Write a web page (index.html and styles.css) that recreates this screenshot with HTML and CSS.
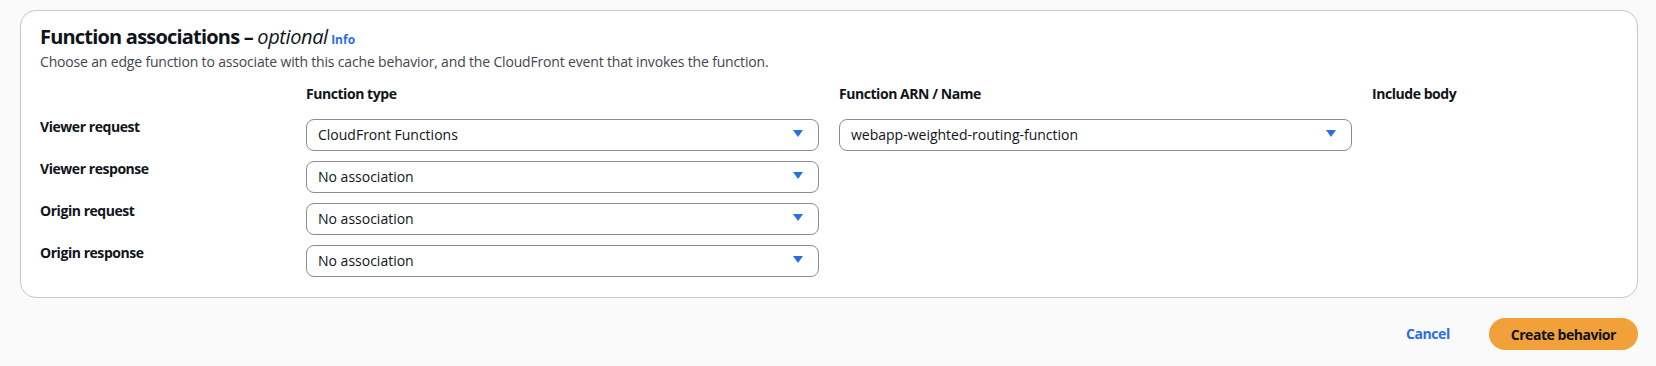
FILE: index.html
```html
<!DOCTYPE html>
<html>
<head>
    <meta charset="UTF-8">
    <meta name="viewport" content="width=device-width, initial-scale=1.0">
    <title>Function associations</title>
    <link rel="stylesheet" href="styles.css">
</head>
<body>
    <div class="page">
        <!-- Function associations panel -->
        <div class="card">
            <div class="card-header">
                <h2>Function associations – <i>optional</i> <a class="info" href="#">Info</a></h2>
                <p class="desc">Choose an edge function to associate with this cache behavior, and the CloudFront event that invokes the function.</p>
            </div>

            <div class="assoc-grid">
                <div class="col-head"></div>
                <div class="col-head">Function type</div>
                <div class="col-head">Function ARN / Name</div>
                <div class="col-head">Include body</div>

                <div class="row-label">Viewer request</div>
                <div class="select">
                    <span>CloudFront Functions</span>
                    <svg class="caret" width="10" height="7" viewBox="0 0 10 7"><path d="M0 0 H10 L5 7 Z"/></svg>
                </div>
                <div class="select">
                    <span>webapp-weighted-routing-function</span>
                    <svg class="caret" width="10" height="7" viewBox="0 0 10 7"><path d="M0 0 H10 L5 7 Z"/></svg>
                </div>
                <div></div>

                <div class="row-label">Viewer response</div>
                <div class="select">
                    <span>No association</span>
                    <svg class="caret" width="10" height="7" viewBox="0 0 10 7"><path d="M0 0 H10 L5 7 Z"/></svg>
                </div>
                <div></div>
                <div></div>

                <div class="row-label">Origin request</div>
                <div class="select">
                    <span>No association</span>
                    <svg class="caret" width="10" height="7" viewBox="0 0 10 7"><path d="M0 0 H10 L5 7 Z"/></svg>
                </div>
                <div></div>
                <div></div>

                <div class="row-label">Origin response</div>
                <div class="select">
                    <span>No association</span>
                    <svg class="caret" width="10" height="7" viewBox="0 0 10 7"><path d="M0 0 H10 L5 7 Z"/></svg>
                </div>
                <div></div>
                <div></div>
            </div>
        </div>

        <div class="actions">
            <a class="cancel" href="#">Cancel</a>
            <button class="primary">Create behavior</button>
        </div>
    </div>
</body>
</html>
```

FILE: styles.css
```css
/* Global Styles */
* {
    margin: 0;
    padding: 0;
    box-sizing: border-box;
}

body {
    background: #fafafa;
    color: #0f141a;
    font-family: 'Open Sans', sans-serif;
    font-size: 14px;
    line-height: 20px;
}

.page {
    padding: 10px 18px 0 20px;
}

/* Panel */
.card {
    background-color: #fff;
    border: 1px solid #c6c6cd;
    border-radius: 16px;
    padding: 14px 19px 20px 19px;
}

.card-header h2 {
    font-size: 20px;
    line-height: 24px;
    font-weight: 700;
    letter-spacing: -0.8px;
}

.card-header h2 i {
    font-weight: 500;
    letter-spacing: -0.4px;
}

.info {
    color: #2a6fe0;
    font-size: 12px;
    font-weight: 700;
    letter-spacing: 0;
    text-decoration: none;
    margin-left: -1px;
}

.desc {
    color: #424650;
    letter-spacing: -0.17px;
}

/* Grid of events */
.assoc-grid {
    display: grid;
    grid-template-columns: 246px 513px 513px 1fr;
    column-gap: 20px;
    row-gap: 10px;
    margin-top: 12px;
}

.col-head {
    font-weight: 700;
    letter-spacing: -0.45px;
    margin-bottom: 5px;
}

.row-label {
    font-weight: 700;
    letter-spacing: -0.45px;
    line-height: 16px;
}

.select {
    height: 32px;
    border: 1px solid #8c8c94;
    border-radius: 8px;
    padding: 0 15px 0 11px;
    display: flex;
    align-items: center;
    justify-content: space-between;
}

.caret {
    fill: #2a6fe0;
    margin-top: -3px;
}

/* Footer buttons */
.actions {
    display: flex;
    justify-content: flex-end;
    align-items: center;
    margin-top: 20px;
}

.cancel {
    color: #2a6fe0;
    font-weight: 700;
    letter-spacing: -0.45px;
    text-decoration: none;
    margin-right: 39px;
}

.primary {
    height: 32px;
    padding: 0 22px;
    border: none;
    border-radius: 16px;
    background-color: #f2a03a;
    color: #0f141a;
    font-family: 'Open Sans', sans-serif;
    font-size: 14px;
    font-weight: 700;
    letter-spacing: -0.45px;
    cursor: pointer;
}
```
